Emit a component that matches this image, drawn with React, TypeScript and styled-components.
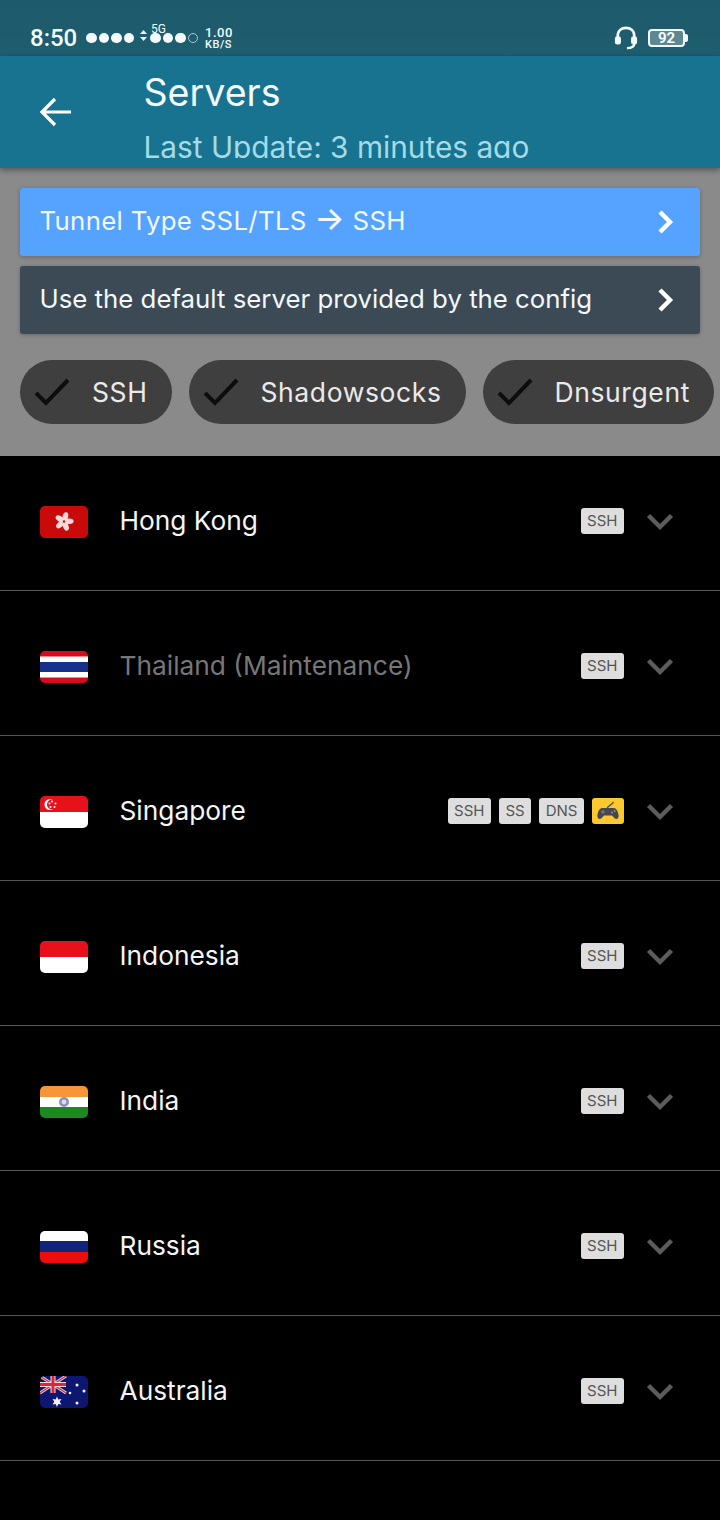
import React from 'react';
import styled, { createGlobalStyle } from 'styled-components';

const GlobalStyle = createGlobalStyle`
  html, body { margin: 0; padding: 0; background: #000; }
  body { width: 720px; height: 1520px; overflow: hidden; font-family: Inter, "Liberation Sans", sans-serif; }
  * { box-sizing: border-box; }
`;

const Flag = ({ name }: { name: string }) => {
  switch (name) {
    case 'hk':
      return (
        <FlagSvg viewBox="0 0 48 32">
          <rect width="48" height="32" fill="#c90a0a" />
          <g fill="#f6d9d9" transform="translate(24 15.5)">
            {[0, 72, 144, 216, 288].map(a => (
              <ellipse key={a} cx="0" cy="-5" rx="2.8" ry="4.6" transform={`rotate(${a + 15})`} />
            ))}
            <circle r="1.2" fill="#c90a0a" />
          </g>
        </FlagSvg>
      );
    case 'th':
      return (
        <FlagSvg viewBox="0 0 48 32">
          <rect width="48" height="32" fill="#d80a1c" />
          <rect y="5.5" width="48" height="21" fill="#fff" />
          <rect y="11" width="48" height="10" fill="#17308c" />
        </FlagSvg>
      );
    case 'sg':
      return (
        <FlagSvg viewBox="0 0 48 32">
          <rect width="48" height="16" fill="#e8101a" />
          <rect y="16" width="48" height="16" fill="#fff" />
          <circle cx="10" cy="8.5" r="5.5" fill="#fff" />
          <circle cx="12" cy="8.5" r="5" fill="#e8101a" />
          <g fill="#fff">
            <circle cx="12" cy="5.5" r="1" />
            <circle cx="15.5" cy="7.5" r="1" />
            <circle cx="14.5" cy="11" r="1" />
            <circle cx="10.5" cy="11" r="1" />
            <circle cx="9.5" cy="7.5" r="1" />
          </g>
        </FlagSvg>
      );
    case 'id':
      return (
        <FlagSvg viewBox="0 0 48 32">
          <rect width="48" height="16" fill="#e8101a" />
          <rect y="16" width="48" height="16" fill="#fff" />
        </FlagSvg>
      );
    case 'in':
      return (
        <FlagSvg viewBox="0 0 48 32">
          <rect width="48" height="11" fill="#f7953a" />
          <rect y="11" width="48" height="10" fill="#fff" />
          <rect y="21" width="48" height="11" fill="#1d8a1f" />
          <circle cx="24" cy="16" r="5" fill="#8f8fc0" />
          <circle cx="24" cy="16" r="2.4" fill="#dcdcec" />
        </FlagSvg>
      );
    case 'ru':
      return (
        <FlagSvg viewBox="0 0 48 32">
          <rect width="48" height="11" fill="#fff" />
          <rect y="10" width="48" height="11" fill="#12237e" />
          <rect y="21" width="48" height="11" fill="#ee0d0d" />
        </FlagSvg>
      );
    default:
      return (
        <FlagSvg viewBox="0 0 48 32">
          <rect width="48" height="32" fill="#0d1670" />
          <g stroke="#e8d5dc" strokeWidth="3">
            <path d="M0 0 L26 17 M26 0 L0 17" />
          </g>
          <g stroke="#d8283c" strokeWidth="1.2">
            <path d="M0 0 L26 17 M26 0 L0 17" />
          </g>
          <path d="M13 0 V17 M0 8.5 H26" stroke="#f0dde0" strokeWidth="5" />
          <path d="M13 0 V17 M0 8.5 H26" stroke="#d8283c" strokeWidth="3" />
          <g fill="#f2f2ff">
            <path d="M17 20.5 L18.3 23.5 L21.5 23 L19.7 25.8 L21.5 28.5 L18.3 28 L17 31 L15.7 28 L12.5 28.5 L14.3 25.8 L12.5 23 L15.7 23.5 Z" />
            <circle cx="37" cy="9" r="1.5" />
            <circle cx="44" cy="15" r="1.5" />
            <circle cx="30" cy="17" r="1.3" />
            <circle cx="37" cy="27" r="1.5" />
          </g>
        </FlagSvg>
      );
  }
};

const Gamepad = () => (
  <PadSvg viewBox="0 0 22 20">
    <path d="M10 8 C10.5 4 14 5.5 16.5 1" fill="none" stroke="#4d4a3a" strokeWidth="1.3" />
    <path
      d="M5.5 7 H16.5 C19.5 7 21 10.5 21.6 14.5 C22 18 19 19 17.3 17 L15 14.5 H7 L4.7 17 C3 19 0 18 .4 14.5 C1 10.5 2.5 7 5.5 7 Z"
      fill="#46484d"
    />
    <path d="M4 10.8 H8 M6 8.8 V12.8" stroke="#77797d" strokeWidth="1.2" />
    <circle cx="15" cy="11.6" r="1" fill="#8a8c90" />
    <circle cx="17.6" cy="10" r="1" fill="#8a8c90" />
  </PadSvg>
);

const Chevron = () => (
  <ChevronSvg viewBox="0 0 28 18">
    <path d="M2.5 2.5 L14 14 L25.5 2.5" fill="none" stroke="#5c5c5c" strokeWidth="4.4" />
  </ChevronSvg>
);

const Arrow = () => (
  <ArrowSvg viewBox="0 0 18 26">
    <path d="M3 3 L13 13 L3 23" fill="none" stroke="#fff" strokeWidth="4.4" />
  </ArrowSvg>
);

const Check = () => (
  <CheckSvg viewBox="0 0 36 30">
    <path d="M2 16 L12 26 L34 3" fill="none" stroke="#0d0d0d" strokeWidth="4" />
  </CheckSvg>
);

const servers = [
  { flag: 'hk', name: 'Hong Kong', tags: ['SSH'] },
  { flag: 'th', name: 'Thailand (Maintenance)', tags: ['SSH'], off: true },
  { flag: 'sg', name: 'Singapore', tags: ['SSH', 'SS', 'DNS'], game: true },
  { flag: 'id', name: 'Indonesia', tags: ['SSH'] },
  { flag: 'in', name: 'India', tags: ['SSH'] },
  { flag: 'ru', name: 'Russia', tags: ['SSH'] },
  { flag: 'au', name: 'Australia', tags: ['SSH'] },
];

function App() {
  return (
    <Page>
      <GlobalStyle />
      <StatusBar>
        <Time>8:50</Time>
        <Dots>
          <Dot /><Dot /><Dot /><Dot />
        </Dots>
        <Signal>
          <Updown>
            <svg viewBox="0 0 7 11" width="7" height="11">
              <path d="M3.5 0 L7 4 H0 Z M3.5 11 L0 7 H7 Z" fill="#e8f3f5" />
            </svg>
          </Updown>
          <FiveG>5G</FiveG>
          <Dots>
            <Dot /><Dot /><Dot /><Dot $empty />
          </Dots>
        </Signal>
        <Speed>
          <SpeedValue>1.00</SpeedValue>
          <span>KB/S</span>
        </Speed>
        <StatusRight>
          <svg viewBox="0 0 26 28" width="24" height="26">
            <path d="M4 15 V12 C4 6 8 3 13 3 C18 3 22 6 22 12 V15" fill="none" stroke="#f2fbfc" strokeWidth="2.8" />
            <rect x="1" y="12" width="6.5" height="9" rx="2.5" fill="#f2fbfc" />
            <rect x="18.5" y="12" width="6.5" height="9" rx="2.5" fill="#f2fbfc" />
            <path d="M22 20 C22 24 19 25 14 25" fill="none" stroke="#f2fbfc" strokeWidth="2.6" />
          </svg>
          <Battery>92</Battery>
        </StatusRight>
      </StatusBar>
      <Header>
        <BackButton>
          <svg viewBox="0 0 34 32" width="34" height="32">
            <path d="M32 16 H3 M16 3 L3 16 L16 29" fill="none" stroke="#fff" strokeWidth="3.2" />
          </svg>
        </BackButton>
        <Titles>
          <Title>Servers</Title>
          <Subtitle>Last Update: 3 minutes ago</Subtitle>
        </Titles>
      </Header>
      <Filters>
        <Banner $bg="#55a3ff" $spacing={0.3}>
          <BannerText>
            Tunnel Type SSL/TLS <BigArrow>→</BigArrow> SSH
          </BannerText>
          <Arrow />
        </Banner>
        <Banner $bg="#3c4a56">
          <BannerText>Use the default server provided by the config</BannerText>
          <Arrow />
        </Banner>
        <Chips>
          <Chip><Check /><span>SSH</span></Chip>
          <Chip><Check /><span>Shadowsocks</span></Chip>
          <Chip><Check /><span>Dnsurgent</span></Chip>
        </Chips>
      </Filters>
      <List>
        {servers.map(s => (
          <Row key={s.flag}>
            <Flag name={s.flag} />
            <Name $off={s.off}>{s.name}</Name>
            <Tags>
              {s.tags.map(t => (
                <Tag key={t}>{t}</Tag>
              ))}
              {s.game && (
                <GameTag>
                  <Gamepad />
                </GameTag>
              )}
            </Tags>
            <Chevron />
          </Row>
        ))}
      </List>
    </Page>
  );
}

const Page = styled.div`
  width: 720px;
  height: 1520px;
  background: #000;
  overflow: hidden;
  display: flex;
  flex-direction: column;
`;

const StatusBar = styled.div`
  height: 56px;
  flex: none;
  background: linear-gradient(#1d5a6b, #1f5e6f);
  display: flex;
  align-items: center;
  padding: 20px 35px 0 30px;
  color: #f2fbfc;
`;

const Time = styled.div`
  font-family: Roboto, sans-serif;
  font-size: 24px;
  font-weight: 500;
  width: 55px;
`;

const Dots = styled.div`
  display: flex;
`;

const Dot = styled.i<{ $empty?: boolean }>`
  display: block;
  width: 10.5px;
  height: 10.5px;
  margin: 0 1px;
  border-radius: 50%;
  background: ${p => (p.$empty ? 'transparent' : '#f4fafb')};
  border: ${p => (p.$empty ? '1.5px solid #a8c8d0' : 'none')};
`;

const Signal = styled.div`
  position: relative;
  display: flex;
  align-items: center;
  margin-left: 5px;
  gap: 2px;
`;

const Updown = styled.div`
  display: flex;
  margin-top: -6px;
`;

const FiveG = styled.div`
  position: absolute;
  left: 11px;
  top: -11px;
  font: 400 12px Roboto, sans-serif;
`;

const Speed = styled.div`
  display: flex;
  flex-direction: column;
  align-items: flex-start;
  margin-left: 6px;
  margin-top: 1px;
  font: 500 11px/12px Roboto, sans-serif;
  letter-spacing: 0.5px;
`;

const SpeedValue = styled.span`
  font-size: 13px;
  line-height: 13px;
`;

const StatusRight = styled.div`
  margin-left: auto;
  display: flex;
  align-items: center;
  gap: 10px;
`;

const Battery = styled.div`
  width: 37px;
  height: 18px;
  border: 2px solid #f2fbfc;
  border-radius: 4px;
  background: #5f8791;
  font: 700 15px/14px Roboto, sans-serif;
  text-align: center;
  position: relative;
  &::after {
    content: '';
    position: absolute;
    right: -5px;
    top: 3px;
    width: 3px;
    height: 8px;
    background: #f2fbfc;
    border-radius: 0 2px 2px 0;
  }
`;

const Header = styled.div`
  height: 112px;
  flex: none;
  background: #17738f;
  display: flex;
  position: relative;
  z-index: 1;
  box-shadow: 0 2px 6px rgba(0, 0, 0, 0.4);
`;

const BackButton = styled.div`
  width: 143.5px;
  flex: none;
  display: flex;
  align-items: center;
  padding-left: 39px;
`;

const Titles = styled.div`
  display: flex;
  flex-direction: column;
  padding-top: 14px;
`;

const Title = styled.div`
  font-size: 37.6px;
  line-height: 46px;
  color: #f4fbfd;
`;

const Subtitle = styled.div`
  height: 33px;
  margin-top: 9px;
  overflow: hidden;
  font-size: 29.8px;
  line-height: 44px;
  color: #a4dbe6;
  white-space: nowrap;
`;

const Filters = styled.div`
  height: 288px;
  flex: none;
  background: #8a8a8a;
  padding: 20px 0 0 20px;
  display: flex;
  flex-direction: column;
  gap: 10px;
`;

const Banner = styled.div<{ $bg: string; $spacing?: number }>`
  width: 680px;
  height: 68px;
  flex: none;
  background: ${p => p.$bg};
  border-radius: 3px;
  box-shadow: 0 1px 4px rgba(0, 0, 0, 0.25);
  color: #f2f8fc;
  font-size: 25.8px;
  letter-spacing: ${p => p.$spacing ?? 0}px;
  display: flex;
  align-items: center;
  justify-content: space-between;
  padding: 0 25px 0 19.5px;
`;

const BannerText = styled.span`
  margin-bottom: 4px;
  white-space: nowrap;
`;

const BigArrow = styled.span`
  font-size: 32px;
  line-height: 20px;
  font-weight: 500;
`;

const ArrowSvg = styled.svg`
  width: 18px;
  height: 26px;
`;

const Chips = styled.div`
  display: flex;
  gap: 17px;
  margin-top: 16px;
`;

const Chip = styled.div`
  height: 64px;
  flex: none;
  border-radius: 32px;
  background: #3f3f3f;
  color: #eaeaea;
  font-size: 26.5px;
  letter-spacing: 0.6px;
  display: flex;
  align-items: center;
  padding: 0 24px 0 14px;
  gap: 22px;
`;

const CheckSvg = styled.svg`
  width: 36px;
  height: 30px;
`;

const List = styled.div`
  display: flex;
  flex-direction: column;
`;

const Row = styled.div`
  height: 145px;
  flex: none;
  display: flex;
  align-items: center;
  padding: 60px 46px 52px 40px;
  border-bottom: 1px solid #555;
  &:first-child {
    height: 135px;
    padding-top: 50px;
  }
`;

const FlagSvg = styled.svg`
  width: 48px;
  height: 32px;
  flex: none;
  border-radius: 5px;
`;

const Name = styled.div<{ $off?: boolean }>`
  margin: 0 0 4px 31.5px;
  font-size: 26.3px;
  color: ${p => (p.$off ? '#777' : '#f5f5f5')};
`;

const Tags = styled.div`
  margin: 0 22px 2px auto;
  display: flex;
  gap: 8px;
`;

const Tag = styled.div`
  height: 26px;
  padding: 0 6.5px;
  min-width: 32px;
  border-radius: 3px;
  background: #dedede;
  color: #555;
  font-size: 15px;
  line-height: 26px;
  text-align: center;
`;

const GameTag = styled.div`
  width: 32px;
  height: 26px;
  border-radius: 3px;
  background: #fbc92f;
  display: flex;
  align-items: center;
  justify-content: center;
`;

const PadSvg = styled.svg`
  width: 22px;
  height: 20px;
`;

const ChevronSvg = styled.svg`
  width: 28px;
  height: 18px;
  flex: none;
`;

export default App;
